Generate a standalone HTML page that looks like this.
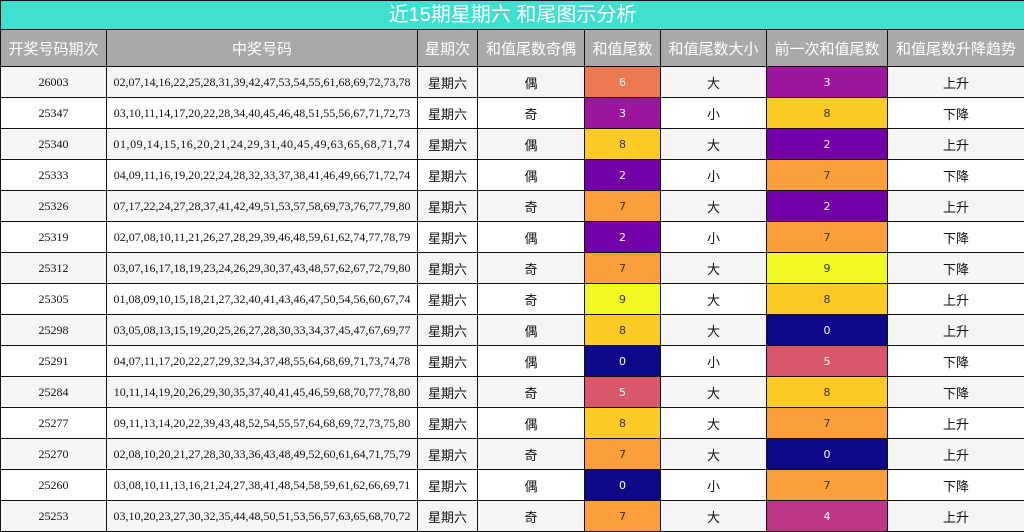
<!DOCTYPE html>
<html><head><meta charset="utf-8"><style>
*{margin:0;padding:0;box-sizing:border-box}
body{width:1024px;height:532px;overflow:hidden;background:#fff;font-family:"Liberation Sans","Noto Sans CJK SC",sans-serif}
table{border-collapse:collapse;table-layout:fixed;width:1024px}
td,th{border:1.5px solid #111;text-align:center;font-size:13px;color:#111;height:31px;padding:0;white-space:nowrap;overflow:hidden}
.t{background:#40e0d0;color:#fff;font-size:20px;font-weight:normal;height:29px;line-height:26px}
.h th{background:#a9a9a9;color:#fff;font-weight:normal;font-size:15px;height:37px}
tr.o td{background:#f5f5f5}
.s{font-family:"Liberation Serif",serif;font-size:12px}
td.c{font-family:"DejaVu Sans",sans-serif;font-size:11px;color:#fff}
td.d{color:#333}
</style></head><body>
<table>
<colgroup><col style="width:106px"><col style="width:311px"><col style="width:60px"><col style="width:107px"><col style="width:76px"><col style="width:106px"><col style="width:121px"><col style="width:137px"></colgroup>
<tr><th class="t" colspan="8">近15期星期六 和尾图示分析</th></tr>
<tr class="h"><th>开奖号码期次</th><th>中奖号码</th><th>星期次</th><th>和值尾数奇偶</th><th>和值尾数</th><th>和值尾数大小</th><th>前一次和值尾数</th><th>和值尾数升降趋势</th></tr>
<tbody id="b"></tbody>
</table>
<script>
var P=["#0d0887","#47039f","#7201a8","#9c179e","#bd3786","#d8576b","#ed7953","#fb9f3a","#fdca26","#f0f921"];
var R=[["26003","02,07,14,16,22,25,28,31,39,42,47,53,54,55,61,68,69,72,73,78","偶",6,"大",3,"上升"],
["25347","03,10,11,14,17,20,22,28,34,40,45,46,48,51,55,56,67,71,72,73","奇",3,"小",8,"下降"],
["25340","01,09,14,15,16,20,21,24,29,31,40,45,49,63,65,68,71,74","偶",8,"大",2,"上升"],
["25333","04,09,11,16,19,20,22,24,28,32,33,37,38,41,46,49,66,71,72,74","偶",2,"小",7,"下降"],
["25326","07,17,22,24,27,28,37,41,42,49,51,53,57,58,69,73,76,77,79,80","奇",7,"大",2,"上升"],
["25319","02,07,08,10,11,21,26,27,28,29,39,46,48,59,61,62,74,77,78,79","偶",2,"小",7,"下降"],
["25312","03,07,16,17,18,19,23,24,26,29,30,37,43,48,57,62,67,72,79,80","奇",7,"大",9,"下降"],
["25305","01,08,09,10,15,18,21,27,32,40,41,43,46,47,50,54,56,60,67,74","奇",9,"大",8,"上升"],
["25298","03,05,08,13,15,19,20,25,26,27,28,30,33,34,37,45,47,67,69,77","偶",8,"大",0,"上升"],
["25291","04,07,11,17,20,22,27,29,32,34,37,48,55,64,68,69,71,73,74,78","偶",0,"小",5,"下降"],
["25284","10,11,14,19,20,26,29,30,35,37,40,41,45,46,59,68,70,77,78,80","奇",5,"大",8,"下降"],
["25277","09,11,13,14,20,22,39,43,48,52,54,55,57,64,68,69,72,73,75,80","偶",8,"大",7,"上升"],
["25270","02,08,10,20,21,27,28,30,33,36,43,48,49,52,60,61,64,71,75,79","奇",7,"大",0,"上升"],
["25260","03,08,10,11,13,16,21,24,27,38,41,48,54,58,59,61,62,66,69,71","偶",0,"小",7,"下降"],
["25253","03,10,20,23,27,30,32,35,44,48,50,51,53,56,57,63,65,68,70,72","奇",7,"大",4,"上升"]];
function c(n){return '<td class="c'+(n>=7?' d':'')+'" style="background:'+P[n]+'">'+n+'</td>'}
var h="";R.forEach(function(r,i){var ls=r[1].length<55?' style="letter-spacing:0.57px"':'';h+='<tr class="'+(i%2==0?'o':'')+'"><td class="s">'+r[0]+'</td><td class="s"'+ls+'>'+r[1]+'</td><td>星期六</td><td>'+r[2]+'</td>'+c(r[3])+'<td>'+r[4]+'</td>'+c(r[5])+'<td>'+r[6]+'</td></tr>'});
document.getElementById("b").innerHTML=h;
</script>
</body></html>
